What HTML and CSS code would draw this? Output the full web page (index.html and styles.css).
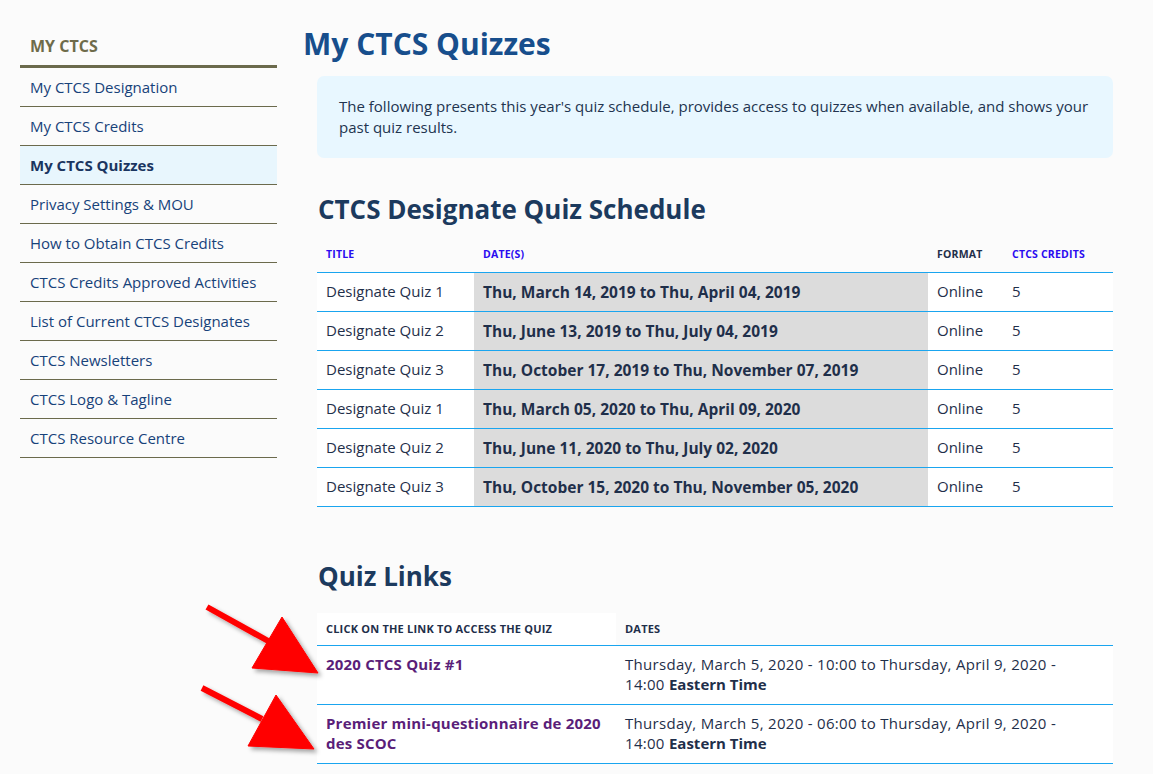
FILE: index.html
```html
<!DOCTYPE html>
<html lang="en">
<head>
    <meta charset="UTF-8">
    <meta name="viewport" content="width=device-width, initial-scale=1.0">
    <title>My CTCS Quizzes</title>
    <link rel="stylesheet" href="styles.css">
</head>
<body>
    <div class="page">
        <nav class="sidebar">
            <h3 class="side-title">MY CTCS</h3>
            <ul class="side-menu">
                <li><a href="#">My CTCS Designation</a></li>
                <li><a href="#">My CTCS Credits</a></li>
                <li class="active"><a href="#">My CTCS Quizzes</a></li>
                <li><a href="#">Privacy Settings &amp; MOU</a></li>
                <li><a href="#">How to Obtain CTCS Credits</a></li>
                <li><a href="#">CTCS Credits Approved Activities</a></li>
                <li><a href="#">List of Current CTCS Designates</a></li>
                <li><a href="#">CTCS Newsletters</a></li>
                <li><a href="#">CTCS Logo &amp; Tagline</a></li>
                <li><a href="#">CTCS Resource Centre</a></li>
            </ul>
        </nav>

        <main class="main">
            <h1>My CTCS Quizzes</h1>
            <div class="content">
                <div class="intro">
                    <p>The following presents this year's quiz schedule, provides access to quizzes when available, and shows your past quiz results.</p>
                </div>

                <h2>CTCS Designate Quiz Schedule</h2>
                <table class="schedule">
                    <thead>
                        <tr>
                            <th class="c-title"><a href="#">Title</a></th>
                            <th class="c-date"><a href="#">Date(s)</a></th>
                            <th class="c-format">Format</th>
                            <th class="c-credits"><a href="#">CTCS Credits</a></th>
                        </tr>
                    </thead>
                    <tbody>
                        <tr><td>Designate Quiz 1</td><td class="date">Thu, March 14, 2019 to Thu, April 04, 2019</td><td>Online</td><td>5</td></tr>
                        <tr><td>Designate Quiz 2</td><td class="date">Thu, June 13, 2019 to Thu, July 04, 2019</td><td>Online</td><td>5</td></tr>
                        <tr><td>Designate Quiz 3</td><td class="date">Thu, October 17, 2019 to Thu, November 07, 2019</td><td>Online</td><td>5</td></tr>
                        <tr><td>Designate Quiz 1</td><td class="date">Thu, March 05, 2020 to Thu, April 09, 2020</td><td>Online</td><td>5</td></tr>
                        <tr><td>Designate Quiz 2</td><td class="date">Thu, June 11, 2020 to Thu, July 02, 2020</td><td>Online</td><td>5</td></tr>
                        <tr><td>Designate Quiz 3</td><td class="date">Thu, October 15, 2020 to Thu, November 05, 2020</td><td>Online</td><td>5</td></tr>
                    </tbody>
                </table>

                <h2 class="links-title">Quiz Links</h2>
                <table class="links">
                    <thead>
                        <tr>
                            <th class="l-name">Click on the link to access the quiz</th>
                            <th class="l-dates">Dates</th>
                        </tr>
                    </thead>
                    <tbody>
                        <tr>
                            <td><a href="#">2020 CTCS Quiz #1</a></td>
                            <td class="when"><span class="range">Thursday, March 5, 2020 - 10:00 to Thursday, April 9, 2020 -</span> 14:00 <strong>Eastern Time</strong></td>
                        </tr>
                        <tr>
                            <td><a href="#">Premier mini-questionnaire de 2020 des SCOC</a></td>
                            <td class="when"><span class="range">Thursday, March 5, 2020 - 06:00 to Thursday, April 9, 2020 -</span> 14:00 <strong>Eastern Time</strong></td>
                        </tr>
                    </tbody>
                </table>
            </div>
        </main>
    </div>

    <svg class="arrows" width="140" height="170" viewBox="190 595 140 170">
        <defs>
            <filter id="shadow" x="-20%" y="-20%" width="150%" height="150%">
                <feDropShadow dx="3" dy="3" stdDeviation="2" flood-color="#000" flood-opacity="0.35"/>
            </filter>
        </defs>
        <g fill="#ff0000" stroke="#ff0000" filter="url(#shadow)">
            <line x1="207" y1="607" x2="270" y2="642" stroke-width="6"/>
            <polygon points="282,617 252,668 318,673" stroke-width="1"/>
            <line x1="202" y1="688" x2="262" y2="719" stroke-width="6"/>
            <polygon points="276,695 248,746 314,749" stroke-width="1"/>
        </g>
    </svg>
</body>
</html>
```
FILE: styles.css
```css
body {
    margin: 0;
    background-color: #fbfbfb;
    font-family: "Open Sans", "Noto Sans", sans-serif;
    color: #1f2f4a;
}
a {
    text-decoration: none;
}
.page {
    display: flex;
    padding-top: 26px;
}

/* left menu */
.sidebar {
    width: 257px;
    margin-left: 20px;
    flex-shrink: 0;
}
.side-title {
    margin: 0;
    padding: 10px 10px 9px;
    font-size: 16px;
    line-height: 20px;
    color: #6e6b4a;
    border-bottom: 3px solid #6b6a4c;
}
.side-menu {
    list-style: none;
    margin: 0;
    padding: 0;
}
.side-menu li {
    border-bottom: 1px solid #6b6a4c;
}
.side-menu a {
    display: block;
    padding: 0 10px;
    height: 38px;
    line-height: 38px;
    font-size: 15px;
    color: #17427a;
}
.side-menu li.active {
    background-color: #e8f6fd;
}
.side-menu li.active a {
    font-weight: 700;
    color: #1a3560;
}

/* main column */
.main {
    margin-left: 27px;
    width: 809px;
}
h1 {
    margin: 0;
    font-size: 30px;
    line-height: 40px;
    color: #174e8c;
    position: relative;
    top: -2px;
    left: -1px;
}
.content {
    padding-left: 13px;
    width: 796px;
}
.intro {
    margin-top: 10px;
    background-color: #e8f7ff;
    border-radius: 7px;
    padding: 20px 22px 20px;
}
.intro p {
    margin: 0;
    font-size: 15px;
    line-height: 21px;
    color: #22344f;
}
h2 {
    margin: 35px 0 0;
    font-size: 26px;
    line-height: 32px;
    color: #1c3a5e;
    padding-left: 1px;
}

/* tables */
table {
    width: 100%;
    border-collapse: collapse;
}
th {
    text-align: left;
    font-size: 10.5px;
    font-weight: 700;
    text-transform: uppercase;
    color: #1f2f4a;
    padding: 0 9px;
    letter-spacing: 0.2px;
}
th a {
    color: #2a0bf0;
}
td {
    font-size: 15px;
    padding: 0 9px;
}
.schedule {
    margin-top: 11px;
}
.schedule thead tr {
    height: 36px;
    border-bottom: 1px solid #1aa5ef;
}
.schedule tbody tr {
    height: 39px;
    background-color: #ffffff;
    border-bottom: 1px solid #1aa5ef;
}
.schedule td {
    padding-top: 0;
    padding-bottom: 1px;
}
.c-title { width: 139px; }
.c-date { width: 436px; }
.c-format { width: 57px; }
.schedule td.date {
    background-color: #dcdcdc;
    font-weight: 700;
    font-size: 15.5px;
    padding-top: 2px;
}

.links-title {
    margin-top: 53px;
}
.links {
    margin-top: 21px;
}
.links thead tr {
    height: 33px;
    border-bottom: 1px solid #1aa5ef;
}
.links th {
    font-size: 11px;
}
.links th.l-name {
    width: 281px;
    background-color: #ffffff;
}
.links tbody tr {
    background-color: #ffffff;
    border-bottom: 1px solid #1aa5ef;
}
.links td {
    vertical-align: top;
    padding: 8px 9px 10px;
    line-height: 20px;
    letter-spacing: 0.3px;
}
.links td .range {
    display: block;
}
.links td a {
    color: #5a1e79;
    font-weight: 700;
    letter-spacing: 0.2px;
}
.links strong {
    font-weight: 700;
    letter-spacing: 0;
}

/* red pointer arrows drawn over the page */
.arrows {
    position: absolute;
    left: 190px;
    top: 595px;
}
```
